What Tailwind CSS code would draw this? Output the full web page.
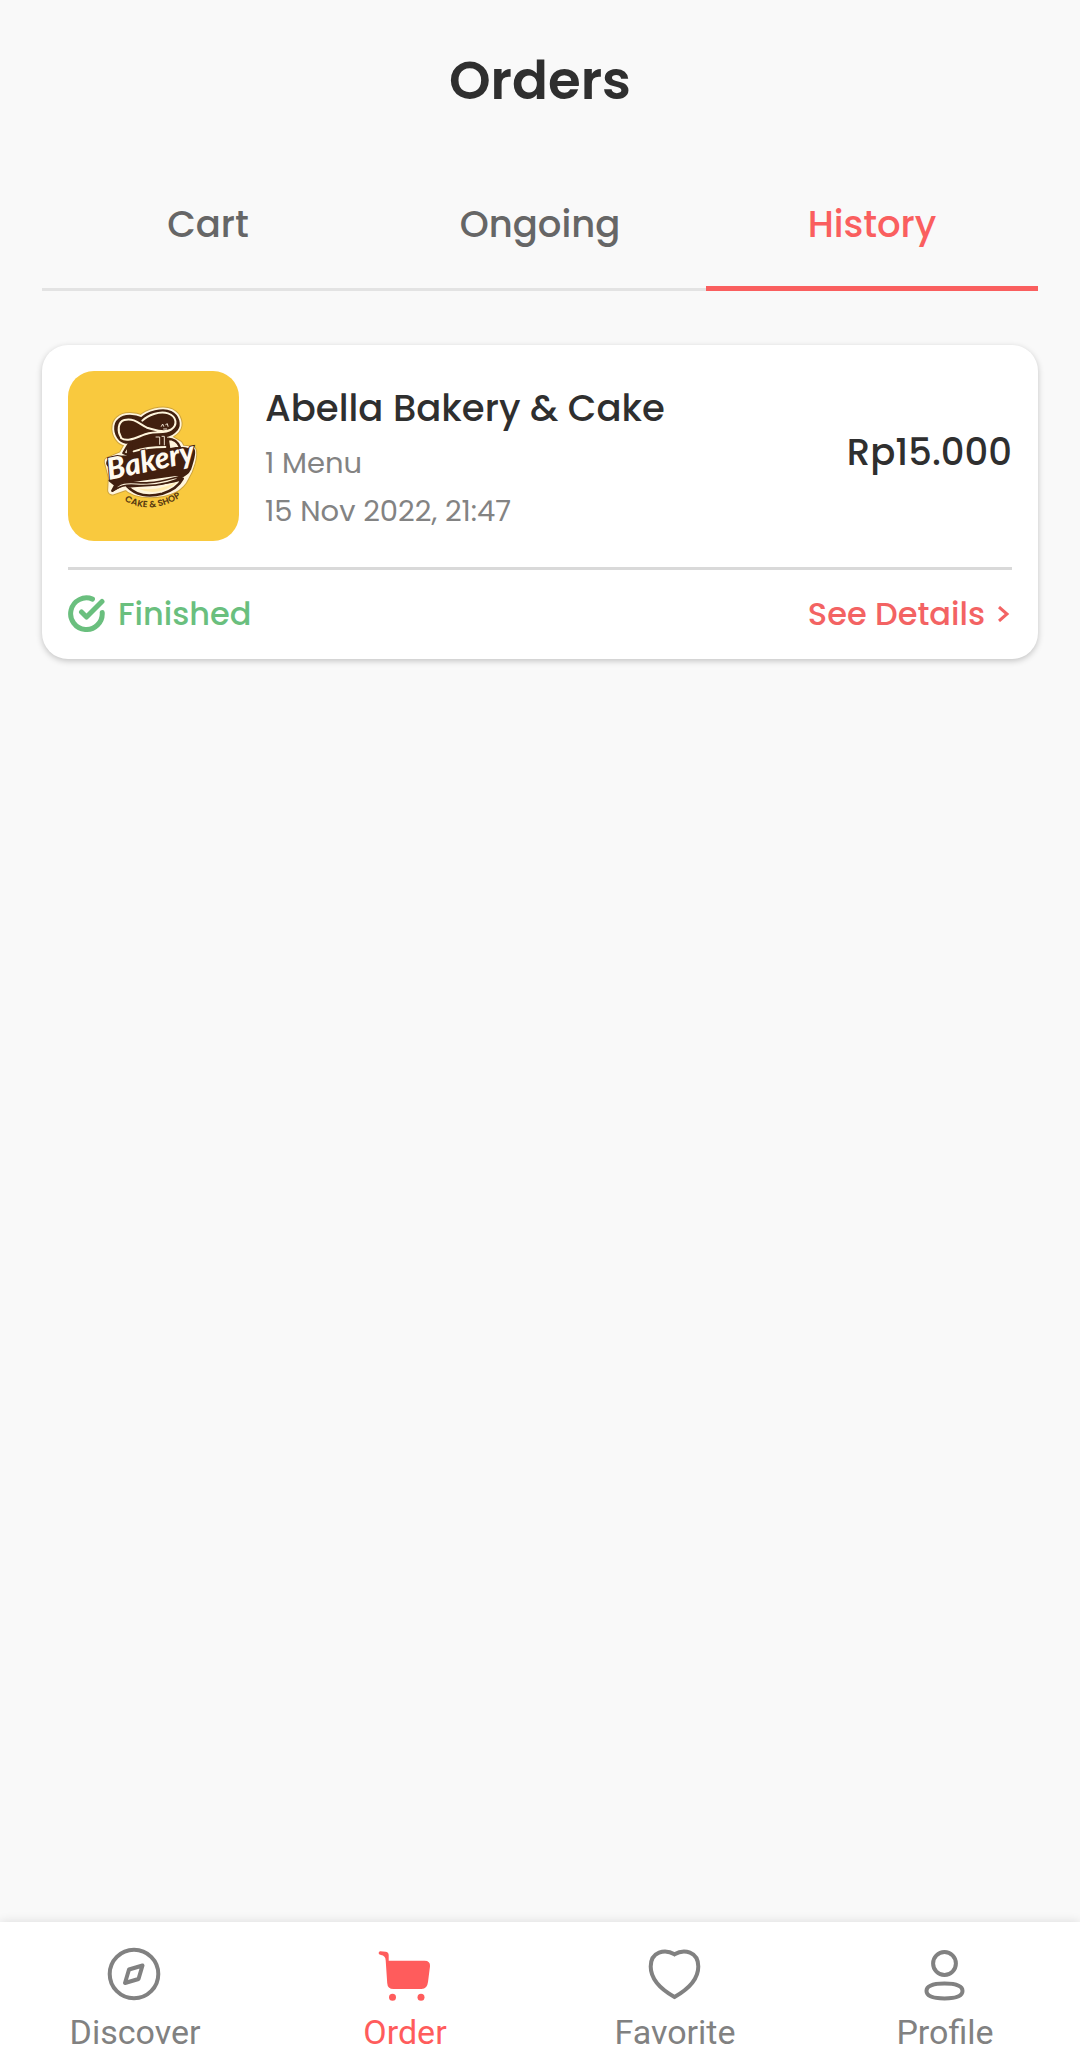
<!DOCTYPE html>
<html lang="en">
<head>
<meta charset="utf-8">
<meta name="viewport" content="width=device-width, initial-scale=1">
<title>Orders</title>
<script src="https://cdn.jsdelivr.net/npm/@tailwindcss/browser@4"></script>
</head>
<body class="flex min-h-screen flex-col bg-[#f9f9f9] font-[Poppins,Inter,sans-serif] text-[#2f2f2f]">
<header class="pt-[41px] text-center">
  <h1 class="text-[53px] leading-[80px] font-semibold">Orders</h1>
</header>

<main class="flex-1 px-[42px]">
  <nav aria-label="Order status" class="mt-[39px] grid grid-cols-3 text-center text-[37px] leading-[64px] font-medium text-[#666]">
    <a href="#cart" class="border-b-3 border-[#e3e3e3] pt-8 pb-8">Cart</a>
    <a href="#ongoing" class="border-b-3 border-[#e3e3e3] pt-8 pb-8">Ongoing</a>
    <a href="#history" aria-current="page" class="border-b-5 border-[#fa5f5f] pt-8 pb-[30px] text-[#fa5f5f]">History</a>
  </nav>

  <article class="mt-[54px] rounded-[26px] bg-white px-[26px] pt-[26px] shadow-[0_2px_6px_rgba(0,0,0,0.22)]">
    <div class="flex items-center border-b-3 border-[#d9d9d9] pb-[26px]">
      <svg class="h-[170px] w-[171px] shrink-0 rounded-[26px]" viewBox="24 18 513 510" role="img" aria-label="Bakery Cake &amp; Shop logo">
        <rect x="24" y="18" width="513" height="510" fill="#f9c93e"/>
        <g stroke-linejoin="round" stroke-linecap="round">
          <g fill="#fff5dc">
            <g stroke="#cfa43c" stroke-width="31">
              <path d="M183 222C166 205 165 178 180 166C194 152 224 155 245 164C265 145 307 133 331 144C353 155 357 179 347 192C338 203 326 208 313 211L319 252L207 267L212 229C199 230 190 229 183 222Z"/>
              <path d="M147 290L189 272L207 240L321 220L355 240L362 254L395 257C400 271 389 310 374 335C360 367 324 384 270 384C235 384 212 374 200 361L157 376L159 337Z"/>
            </g>
            <g stroke="#fff5dc" stroke-width="25">
              <path d="M183 222C166 205 165 178 180 166C194 152 224 155 245 164C265 145 307 133 331 144C353 155 357 179 347 192C338 203 326 208 313 211L319 252L207 267L212 229C199 230 190 229 183 222Z"/>
              <path d="M147 290L189 272L207 240L321 220L355 240L362 254L395 257C400 271 389 310 374 335C360 367 324 384 270 384C235 384 212 374 200 361L157 376L159 337Z"/>
            </g>
          </g>
          <path d="M183 222C166 205 165 178 180 166C194 152 224 155 245 164C265 145 307 133 331 144C353 155 357 179 347 192C338 203 326 208 313 211L319 252L207 267L212 229C199 230 190 229 183 222Z" fill="#42200f" stroke="#42200f" stroke-width="14"/>
          <path d="M183 217C172 199 173 171 193 165C225 157 242 181 261 188M247 167C263 151 298 137 324 145C352 155 352 181 334 193C316 203 295 198 261 188M183 219C205 235 239 211 266 205C292 199 316 206 334 193M221 259C251 249 280 246 316 246" fill="none" stroke="#fff5dc" stroke-width="6"/>
          <path d="M288 216H299V238M306 214H313V240M304 184L308 177L311 184M317 179L322 176L324 184M311 192H320" fill="none" stroke="#eee0ce" stroke-width="3"/>
          <path d="M204 240L190 264L204 270ZM323 221C343 222 355 234 360 247L328 253Z" fill="#fff5dc" stroke="#42200f" stroke-width="7"/>
          <path d="M144 288C158 273 181 275 199 275L320 254C337 252 348 255 356 253C371 242 388 258 400 254C407 260 399 286 390 312C380 333 363 332 352 329L203 350L157 377L166 360L149 347L163 334L157 308C147 305 138 298 144 288Z" fill="#42200f" stroke="#42200f" stroke-width="7"/>
          <path d="M202 364C226 390 265 397 307 386C341 376 358 360 368 341C329 355 268 360 202 364Z" fill="#fff5dc" stroke="#42200f" stroke-width="8"/>
          <path d="M157 378C188 337 224 358 267 353C306 351 342 338 374 331C336 356 286 364 227 361C193 359 182 363 157 378Z" fill="#fff5dc" stroke="#42200f" stroke-width="5"/>
          <path d="M233 370C276 379 321 366 349 352C325 379 272 391 233 370Z" fill="#ffe9ad"/>
        </g>
        <text x="147" y="345" transform="rotate(-12 147 345)" font-family="Lato, sans-serif" font-size="90" font-weight="900" font-style="italic" fill="#fffaf0" stroke="#42200f" stroke-width="6" paint-order="stroke">Bakery</text>
        <path id="tagline" d="M193 407Q280 456 375 387" fill="none"/>
        <text font-family="Poppins, sans-serif" font-size="27" font-weight="600" fill="#573910"><textPath href="#tagline">CAKE &amp; SHOP</textPath></text>
      </svg>
      <div class="ml-[26px] min-w-0 flex-1">
        <h2 class="text-[37px] leading-[62px] font-medium">Abella Bakery &amp; Cake</h2>
        <p class="text-[29px] leading-[48px] text-[#838383]">1 Menu</p>
        <p class="text-[29px] leading-[48px] text-[#838383]">15 Nov 2022, 21:47</p>
      </div>
      <p class="pb-2 text-[37px] leading-[58px] font-medium">Rp15.000</p>
    </div>
    <div class="flex items-center justify-between pt-[19px] pb-[21px] text-[32px] leading-[49px] font-medium">
      <p class="flex items-center gap-[13px] text-[#6abf7e]">
        <svg class="size-[37px]" viewBox="0 0 37 37" fill="none" stroke="currentColor" stroke-width="5" stroke-linecap="round" stroke-linejoin="round" aria-hidden="true"><path d="M24.500 4.100A15.800 15.800 0 1 0 34.200 17.500M13.500 17L18.500 22L34 6.500"/></svg>
        Finished
      </p>
      <a href="#details" class="flex items-center gap-3 text-[#f36363]">See Details
        <svg class="h-4 w-[15px]" viewBox="0 0 15 16" fill="none" stroke="currentColor" stroke-width="3" aria-hidden="true"><path d="M2 1L10 8L2 15"/></svg>
      </a>
    </div>
  </article>
</main>

<nav aria-label="Main" class="grid grid-cols-4 bg-white pt-[23px] pb-[13px] font-[Roboto,sans-serif] text-[34px] leading-[48px] text-[#818181] shadow-[0_0_10px_rgba(0,0,0,0.12)]">
  <a href="#discover" class="flex flex-col items-center gap-[7px]">
    <svg class="size-14" viewBox="0 0 56 56" fill="none" stroke="currentColor" stroke-width="4" stroke-linejoin="round" aria-hidden="true"><circle cx="27" cy="29" r="24.300"/><path d="M22 24.500L35.500 20.500L31.500 34L18 38Z"/></svg>
    Discover
  </a>
  <a href="#order" aria-current="page" class="flex flex-col items-center gap-[7px] text-[#ff5c5c]">
    <svg class="size-14" viewBox="0 0 56 56" fill="currentColor" aria-hidden="true"><path d="M3.500 6.200L8.500 6.800Q11.600 7.200 11.700 10V15.800H47.500Q53.400 15.800 53 21.300L51 37Q50.200 44 44.500 44H16.500Q10.500 44 10.200 38L8.700 15.500Q8.500 10.500 4 10Q1.400 9.500 1.600 8Q1.900 6 3.500 6.200Z"/><circle cx="15.500" cy="52.200" r="3.500"/><circle cx="44" cy="52.200" r="3.500"/></svg>
    Order
  </a>
  <a href="#favorite" class="flex flex-col items-center gap-[7px]">
    <svg class="size-14" viewBox="0 0 56 56" fill="none" stroke="currentColor" stroke-width="4" aria-hidden="true"><path d="M27.500 9.300C18 3.500 3.700 6.500 3.700 21.500C3.700 35.500 16 45.500 27.500 52C39 45.500 51.300 35.500 51.300 21.500C51.300 6.500 37 3.500 27.500 9.300Z"/></svg>
    Favorite
  </a>
  <a href="#profile" class="flex flex-col items-center gap-[7px]">
    <svg class="size-14" viewBox="0 0 56 56" fill="none" stroke="currentColor" stroke-width="4" aria-hidden="true"><circle cx="27.500" cy="18.500" r="11.400"/><path d="M27.500 38.500C39 38.500 45.500 40.800 45.500 46C45.500 51.300 39 53.400 27.500 53.400C16 53.400 9.500 51.300 9.500 46C9.500 40.800 16 38.500 27.500 38.500Z"/></svg>
    Profile
  </a>
</nav>
</body>
</html>
